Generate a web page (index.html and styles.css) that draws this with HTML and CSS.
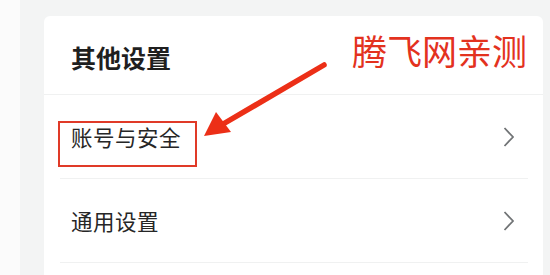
FILE: index.html
```html
<!DOCTYPE html>
<html lang="zh">
<head>
<meta charset="utf-8">
<link rel="stylesheet" href="styles.css">
</head>
<body>
<div class="page">
  <div class="card">
    <div class="header">其他设置</div>
    <div class="row row-first">
      <span class="label">账号与安全</span>
      <svg class="chev" width="12" height="22" viewBox="0 0 12 22"><polyline points="1.5,2 10,11 1.5,20" fill="none" stroke="#717476" stroke-width="1.8"/></svg>
    </div>
    <div class="row">
      <span class="label">通用设置</span>
      <svg class="chev" width="12" height="22" viewBox="0 0 12 22"><polyline points="1.5,2 10,11 1.5,20" fill="none" stroke="#717476" stroke-width="1.8"/></svg>
    </div>
    <div class="row row-last"></div>
  </div>
</div>
<div class="note">腾飞网亲测</div>
<div class="mark"></div>
<svg class="arrow" width="550" height="275" viewBox="0 0 550 275">
  <line x1="324" y1="65" x2="218" y2="127" stroke="#ec2f17" stroke-width="5.5" stroke-linecap="round"/>
  <polygon points="204,136 216,112 231,132" fill="#ec2f17"/>
</svg>
</body>
</html>
```
FILE: styles.css
```css
html, body {
  margin: 0;
  padding: 0;
}
body {
  width: 550px;
  height: 275px;
  overflow: hidden;
  background: #fbfbfb;
  font-family: "Noto Sans CJK SC", "Noto Sans", sans-serif;
  position: relative;
}
.page {
  margin-left: 20px;
  height: 275px;
  background: #f3f4f4;
  padding: 16px 7px 0 24px;
  box-sizing: border-box;
}
.card {
  background: #fff;
  border-radius: 6px 6px 0 0;
  height: 259px;
  overflow: hidden;
}
.header {
  height: 79px;
  box-sizing: border-box;
  padding-left: 27px;
  font-size: 25px;
  font-weight: 700;
  color: #1f1f1f;
  line-height: 82px;
  border-bottom: 1px solid #f0f1f1;
}
.row {
  height: 83px;
  margin: 0 15px 0 16px;
  padding: 0 13px 0 11px;
  display: flex;
  align-items: center;
  justify-content: space-between;
  border-bottom: 1px solid #f0f1f1;
}
.row-last {
  border-bottom: none;
}
.label {
  font-size: 21.5px;
  color: #262626;
  letter-spacing: 0.5px;
}
.chev {
  display: block;
}
.note {
  position: absolute;
  left: 352px;
  top: 30px;
  font-size: 35px;
  line-height: 40px;
  color: #e3321e;
  font-weight: 400;
}
.mark {
  position: absolute;
  left: 58px;
  top: 121px;
  width: 135px;
  height: 42px;
  border: 2.5px solid #e03a28;
}
.arrow {
  position: absolute;
  left: 0;
  top: 0;
}
```
